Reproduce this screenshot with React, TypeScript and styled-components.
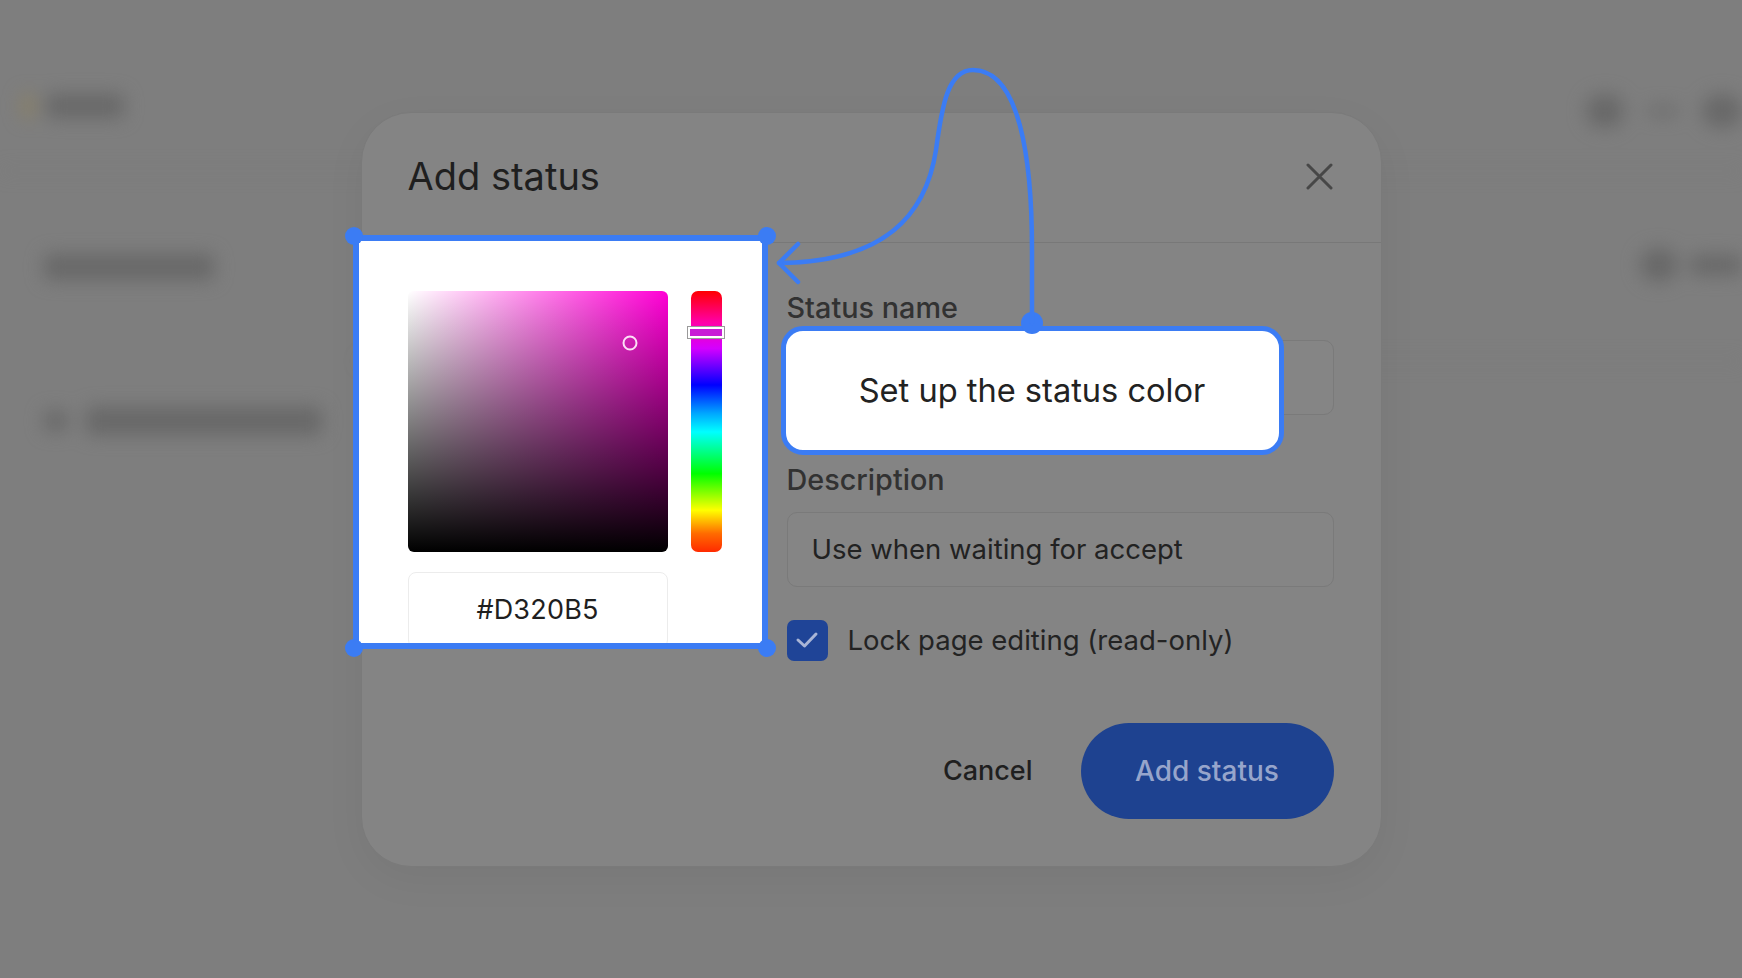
import React from "react";
import styled, { createGlobalStyle } from "styled-components";

const GlobalStyle = createGlobalStyle`
  html, body { margin: 0; padding: 0; }
  body {
    font-family: Inter, "Noto Sans", "Liberation Sans", sans-serif;
    background: #7e7e7e;
    -webkit-font-smoothing: antialiased;
  }
  * { box-sizing: border-box; }
`;

const BLUE = "#3b7cf4";

const Page = styled.div`
  position: relative;
  width: 1742px;
  height: 978px;
  overflow: hidden;
  background: #7e7e7e;
`;

/* ---------- blurred application behind the dialog ---------- */
const AppShell = styled.div`
  display: flex;
  flex-direction: column;
  height: 100%;
  filter: blur(9px);
  color: #5f5f5f;
`;

const AppBar = styled.header`
  height: 172px;
  display: flex;
  justify-content: space-between;
  align-items: flex-start;
  padding: 94px 0 0 22px;
  border-bottom: 2px solid #787878;
`;

const Brand = styled.div`
  display: flex;
  align-items: center;
  gap: 12px;
`;

const BrandMark = styled.span`
  width: 12px;
  height: 24px;
  border-radius: 4px;
  background: #8a8064;
`;

const BarTools = styled.div`
  display: flex;
  align-items: center;
  gap: 24px;
`;

const Blob = styled.span<{ $w: number; $h?: number; $round?: boolean }>`
  display: block;
  width: ${(p) => p.$w}px;
  height: ${(p) => p.$h ?? 24}px;
  border-radius: ${(p) => (p.$round ? "50%" : "6px")};
  background: #686868;
`;

const AppBody = styled.div`
  flex: 1;
  display: flex;
`;

const Sidebar = styled.nav`
  width: 360px;
  display: flex;
  flex-direction: column;
  gap: 124px;
  padding: 80px 0 0 44px;
`;

const NavItem = styled.div`
  display: flex;
  align-items: center;
  gap: 18px;
  height: 30px;
`;

const MainArea = styled.main`
  flex: 1;
  display: flex;
  flex-direction: column;
  align-items: flex-end;
  padding-top: 78px;
`;

const MainTools = styled.div`
  display: flex;
  align-items: center;
  gap: 12px;
  height: 30px;
`;

const TableRule = styled.div`
  align-self: stretch;
  margin-top: 80px;
  height: 2px;
  background: #787878;
`;

/* ---------- dialog ---------- */
const Overlay = styled.div`
  position: absolute;
  inset: 0;
  display: flex;
  align-items: center;
  justify-content: center;
`;

const Modal = styled.section`
  width: 1021px;
  background: #848484;
  border: 1px solid #7a7a7a;
  border-radius: 50px;
  box-shadow: 0 12px 40px rgba(0, 0, 0, 0.05);
`;

const Header = styled.div`
  height: 130px;
  display: flex;
  align-items: center;
  justify-content: space-between;
  padding: 0 48px 2px 46px;
  border-bottom: 1px solid #787878;
`;

const Title = styled.h2`
  margin: 0;
  font-size: 38px;
  font-weight: 400;
  line-height: 46px;
  color: #1f1f1f;
`;

const CloseButton = styled.button`
  width: 27px;
  height: 27px;
  padding: 0;
  border: 0;
  background: none;
  display: flex;
`;

const Body = styled.div`
  display: grid;
  grid-template-columns: 314px 547px;
  column-gap: 65px;
  align-items: start;
  padding: 48px 47px 0 46px;
`;

/* spotlight around the colour picker */
const Spotlight = styled.div`
  position: relative;
  z-index: 3;
  height: 414px;
  margin: -56px -46px 0 -55px;
  border: 6px solid ${BLUE};
  background: #fff;
`;

const SpotlightClip = styled.div`
  height: 100%;
  overflow: hidden;
  padding: 50px 0 0 49px;
`;

const Handle = styled.span<{ $v: "top" | "bottom"; $h: "left" | "right" }>`
  position: absolute;
  width: 18px;
  height: 18px;
  border-radius: 50%;
  background: ${BLUE};
  ${(p) => p.$v}: -14px;
  ${(p) => p.$h}: -14px;
`;

const Picker = styled.div`
  display: grid;
  grid-template-columns: 260px 31px;
  grid-template-rows: 261px 76px;
  column-gap: 23px;
  row-gap: 20px;
  width: 314px;
`;

const SatSquare = styled.div<{ $hue: string }>`
  position: relative;
  border-radius: 6px;
  background: linear-gradient(to top, #000, rgba(0, 0, 0, 0)),
    linear-gradient(to right, #fff, ${(p) => p.$hue});
`;

const SatMarker = styled.span`
  position: absolute;
  width: 15px;
  height: 15px;
  border-radius: 50%;
  border: 2.5px solid rgba(255, 235, 250, 0.95);
  transform: translate(-50%, -50%);
`;

const HueBar = styled.div`
  position: relative;
  border-radius: 7px;
  background: linear-gradient(
    to bottom,
    #ff0000 0%,
    #ff00a8 12%,
    #d400ff 22%,
    #0000ff 36%,
    #00a8ff 47%,
    #00ffff 54%,
    #00ff00 70%,
    #ffff00 84%,
    #ff6a00 93%,
    #ff2a00 100%
  );
`;

const HueThumb = styled.span`
  position: absolute;
  left: -4px;
  right: -3px;
  height: 13px;
  border: 1px solid #9a9a9a;
  box-shadow: inset 0 0 0 2px #fff;
  background: #c81cd6;
`;

const HexField = styled.div`
  display: flex;
  align-items: center;
  justify-content: center;
  border: 1px solid #ececec;
  border-radius: 8px;
  font-size: 27px;
  color: #1f1f1f;
  letter-spacing: 0.2px;
`;

/* form column */
const Form = styled.div`
  display: flex;
  flex-direction: column;
  gap: 33px;
`;

const Field = styled.div`
  display: flex;
  flex-direction: column;
  gap: 15px;
  & + & {
    margin-top: 15px;
  }
`;

const Label = styled.label`
  font-size: 28.8px;
  font-weight: 500;
  line-height: 34px;
  color: #323232;
`;

const InputWrap = styled.div`
  position: relative;
`;

const TextInput = styled.input`
  display: block;
  width: 100%;
  height: 75px;
  padding: 0 24px;
  border: 1px solid #7a7a7a;
  border-radius: 10px;
  background: #858585;
  font-family: inherit;
  font-size: 27.5px;
  color: #222;
  outline: none;
`;

const Callout = styled.div`
  position: absolute;
  z-index: 3;
  left: -6px;
  top: -14px;
  width: 503px;
  height: 129px;
  display: flex;
  align-items: center;
  justify-content: center;
  background: #fff;
  border: 5px solid ${BLUE};
  border-radius: 22px;
  font-size: 32.6px;
  color: #222;
  &::before {
    content: "";
    position: absolute;
    top: -19px;
    left: 50%;
    width: 22px;
    height: 22px;
    margin-left: -11px;
    border-radius: 50%;
    background: ${BLUE};
  }
`;

const CheckRow = styled.label`
  display: flex;
  align-items: center;
  gap: 20px;
  font-size: 27.5px;
  color: #232323;
`;

const CheckBox = styled.span`
  width: 41px;
  height: 41px;
  border-radius: 7px;
  background: #1f4497;
  display: flex;
  align-items: center;
  justify-content: center;
`;

const Footer = styled.div`
  display: flex;
  justify-content: flex-end;
  align-items: center;
  gap: 20px;
  margin-top: 62px;
  padding: 0 47px 47px 46px;
`;

const GhostButton = styled.button`
  height: 96px;
  padding: 0 28px;
  border: 0;
  background: none;
  font-family: inherit;
  font-size: 27px;
  font-weight: 500;
  color: #1f1f1f;
`;

const PrimaryButton = styled.button`
  width: 253px;
  height: 96px;
  border: 0;
  border-radius: 48px;
  background: #1e4290;
  font-family: inherit;
  font-size: 28px;
  font-weight: 500;
  color: #97a5cb;
`;

/* annotation arrow */
const Annotation = styled.svg`
  position: absolute;
  inset: 0;
  z-index: 5;
  pointer-events: none;
`;

export default function App() {
  return (
    <Page>
      <GlobalStyle />
      <AppShell aria-hidden>
        <AppBar>
          <Brand>
            <BrandMark />
            <Blob $w={78} />
          </Brand>
          <BarTools>
            <Blob $w={38} $h={34} $round />
            <Blob $w={30} $h={8} />
            <Blob $w={40} $h={34} $round />
          </BarTools>
        </AppBar>
        <AppBody>
          <Sidebar>
            <NavItem>
              <Blob $w={170} $h={26} />
            </NavItem>
            <NavItem>
              <Blob $w={24} $h={20} />
              <Blob $w={236} $h={28} />
            </NavItem>
          </Sidebar>
          <MainArea>
            <MainTools>
              <Blob $w={38} $h={34} $round />
              <Blob $w={52} $h={20} />
            </MainTools>
            <TableRule />
          </MainArea>
        </AppBody>
      </AppShell>

      <Overlay>
        <Modal role="dialog" aria-label="Add status">
          <Header>
            <Title>Add status</Title>
            <CloseButton aria-label="Close">
              <svg width="27" height="27" viewBox="0 0 27 27">
                <path
                  d="M2 2 L25 25 M25 2 L2 25"
                  stroke="#474747"
                  strokeWidth="3"
                  strokeLinecap="round"
                  fill="none"
                />
              </svg>
            </CloseButton>
          </Header>

          <Body>
            <Spotlight>
              <SpotlightClip>
                <Picker>
                  <SatSquare $hue="#ff00d5">
                    <SatMarker style={{ left: 222, top: 52 }} />
                  </SatSquare>
                  <HueBar>
                    <HueThumb style={{ top: 35 }} />
                  </HueBar>
                  <HexField>#D320B5</HexField>
                </Picker>
              </SpotlightClip>
              <Handle $v="top" $h="left" />
              <Handle $v="top" $h="right" />
              <Handle $v="bottom" $h="left" />
              <Handle $v="bottom" $h="right" />
            </Spotlight>

            <Form>
              <Field>
                <Label>Status name</Label>
                <InputWrap>
                  <TextInput readOnly defaultValue="" />
                  <Callout>Set up the status color</Callout>
                </InputWrap>
              </Field>
              <Field>
                <Label>Description</Label>
                <TextInput readOnly defaultValue="Use when waiting for accept" />
              </Field>
              <CheckRow>
                <CheckBox>
                  <svg width="24" height="24" viewBox="0 0 24 24">
                    <path
                      d="M3 12 L9.5 18 L21 6"
                      stroke="#a9b5d6"
                      strokeWidth="3"
                      strokeLinecap="round"
                      strokeLinejoin="round"
                      fill="none"
                    />
                  </svg>
                </CheckBox>
                Lock page editing (read-only)
              </CheckRow>
            </Form>
          </Body>

          <Footer>
            <GhostButton>Cancel</GhostButton>
            <PrimaryButton>Add status</PrimaryButton>
          </Footer>
        </Modal>
      </Overlay>

      <Annotation width="1742" height="978" viewBox="0 0 1742 978">
        <path
          d="M1032 323 L1032 250 C1032 160 1020 70 973 70 C948 70 942 105 936 150 C926 215 885 262 779 263"
          stroke={BLUE}
          strokeWidth="4.5"
          fill="none"
          strokeLinecap="round"
        />
        <path
          d="M798 244 L779 263 L798 282"
          stroke={BLUE}
          strokeWidth="4.5"
          fill="none"
          strokeLinecap="round"
          strokeLinejoin="round"
        />
      </Annotation>
    </Page>
  );
}
